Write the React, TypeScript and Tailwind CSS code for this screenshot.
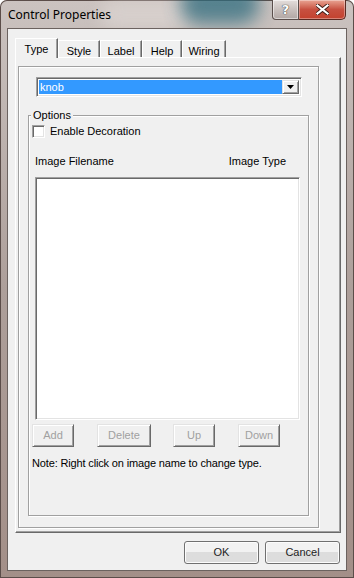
import React from "react";

const tabs = ["Type", "Style", "Label", "Help", "Wiring"];

const raised =
  "border border-t-[#e3e3e3] border-l-[#e3e3e3] border-r-[#696969] border-b-[#696969] shadow-[inset_1px_1px_0_#fff,inset_-1px_-1px_0_#a0a0a0] bg-[#f0f0f0]";

const sunken =
  "border border-t-[#a0a0a0] border-l-[#a0a0a0] border-r-white border-b-white shadow-[inset_1px_1px_0_#696969,inset_-1px_-1px_0_#e3e3e3]";

function SmallButton({ label, width }: { label: string; width: string }) {
  return (
    <div
      className={`${raised} ${width} flex h-[23px] items-center justify-center text-[#a0a0a0]`}
    >
      {label}
    </div>
  );
}

function DialogButton({ label }: { label: string }) {
  return (
    <div className="flex h-[23px] w-[75px] items-center justify-center rounded-[3px] border border-[#707070] bg-gradient-to-b from-[#f2f2f2] from-50% to-[#dddddd] to-50% text-[#1e1e1e] shadow-[inset_0_0_0_1px_#fcfcfc]">
      {label}
    </div>
  );
}

export default function App() {
  return (
    <div className="relative h-[578px] w-[354px] overflow-hidden rounded-t-[7px] bg-gradient-to-b from-[#cbc3c0] via-[#ad9f9a] to-[#a38f88] font-['Liberation_Sans',Arial,sans-serif] text-[10.5px] text-black shadow-[inset_0_0_0_1px_#5b4d49]">
      {/* blurred glass behind title */}
      <div className="absolute left-[100px] top-0 h-[30px] w-[90px] rounded-full bg-[#e0d9d6] opacity-60 blur-[8px]" />
      <div className="absolute -top-[16px] left-[180px] h-[40px] w-[80px] rounded-full bg-[#2f6c7e] opacity-75 blur-[9px]" />

      {/* title bar */}
      <div className="relative flex h-[28px] justify-between">
        <div className="pl-[8px] pt-[6px] font-['Noto_Sans',sans-serif] text-[12px] text-black">
          Control Properties
        </div>
        <div className="flex pr-[8px]">
          <div className="flex h-[20px] w-[27px] items-center justify-center rounded-bl-[4px] border border-t-0 border-[#5a4e4b] bg-gradient-to-b from-[#e4dedc] via-[#c9c0bd] to-[#b1a7a4] shadow-[inset_0_0_0_1px_rgba(255,255,255,0.5)]">
            <span className="font-['DejaVu_Sans',sans-serif] text-[13px] font-bold leading-none text-white [text-shadow:0_0_1px_#333,0_0_1px_#333]">
              ?
            </span>
          </div>
          <div className="flex h-[20px] w-[47px] items-center justify-center rounded-br-[5px] border border-l-0 border-t-0 border-[#5a2a22] bg-gradient-to-b from-[#e8a493] via-[#c75040] to-[#c3412e] shadow-[inset_0_0_0_1px_rgba(255,255,255,0.35)]">
            <svg width="13" height="11" viewBox="0 0 13 11">
              <path
                d="M1.5 1.5 L11.5 9.5 M11.5 1.5 L1.5 9.5"
                stroke="#3a1a14"
                strokeWidth="4"
                strokeLinecap="square"
              />
              <path
                d="M1.5 1.5 L11.5 9.5 M11.5 1.5 L1.5 9.5"
                stroke="#ffffff"
                strokeWidth="2.2"
                strokeLinecap="square"
              />
            </svg>
          </div>
        </div>
      </div>

      {/* client area */}
      <div className="relative mx-[7px] h-[543px] border border-[#6b625f] bg-[#f0f0f0]">
        {/* tab strip */}
        <div className="ml-[7px] mt-[9px] flex h-[19px] items-end">
          {tabs.map((t, i) =>
            i === 0 ? (
              <div
                key={t}
                className="relative z-10 -mb-px flex h-[20px] w-[43px] items-start justify-center border-l border-t border-r border-l-white border-t-white border-r-[#696969] bg-[#f0f0f0] pt-[2px] text-[11px] shadow-[inset_-1px_0_0_#a0a0a0]"
              >
                {t}
              </div>
            ) : (
              <div
                key={t}
                className={`flex h-[17px] items-start justify-center border-l border-t border-r border-l-white border-t-white border-r-[#696969] pt-[2px] text-[11px] shadow-[inset_-1px_0_0_#a0a0a0] ${
                  t === "Wiring" ? "w-[44px]" : t === "Help" ? "w-[40px]" : "w-[42px]"
                }`}
              >
                {t}
              </div>
            ),
          )}
        </div>

        {/* tab panel */}
        <div className="ml-[7px] h-[476px] w-[326px] border border-l-white border-t-white border-r-[#696969] border-b-[#696969] shadow-[inset_-1px_-1px_0_#a0a0a0]">
          {/* page frame */}
          <div className="ml-[2px] mt-[8px] h-[462px] w-[301px] border border-[#a0a0a0] shadow-[1px_1px_0_#fff,inset_1px_1px_0_#fff]">
            {/* combo box */}
            <div
              className={`${sunken} ml-[17px] mt-[10px] flex h-[20px] w-[266px] bg-white p-[2px]`}
            >
              <div className="flex flex-1 items-center bg-[#3399ff] pl-[1px] text-[11px] text-white">
                knob
              </div>
              <div className={`${raised} flex w-[17px] items-center justify-center`}>
                <svg width="7" height="4" viewBox="0 0 7 4">
                  <path d="M0 0 H7 L3.5 4 Z" fill="#000" />
                </svg>
              </div>
            </div>

            {/* Options group */}
            <div className="relative ml-[9px] mt-[18px] h-[401px] w-[281px] border border-[#a0a0a0] shadow-[1px_1px_0_#fff,inset_1px_1px_0_#fff]">
              <div className="absolute -top-[8px] left-[2px] bg-[#f0f0f0] px-[2px] text-[11px] leading-[14px]">
                Options
              </div>

              <div className="ml-[3px] mt-[9px] flex h-[13px] items-center gap-[5px]">
                <div className={`${sunken} h-[13px] w-[13px] bg-white`} />
                <span className="text-[11px]">Enable Decoration</span>
              </div>

              <div className="ml-[6px] mr-[22px] mt-[17px] flex h-[12px] items-center justify-between text-[11px]">
                <span>Image Filename</span>
                <span>Image Type</span>
              </div>

              <div className={`${sunken} ml-[6px] mt-[10px] h-[243px] w-[265px] bg-white`} />

              <div className="ml-[3px] mt-[4px] flex text-[11px]">
                <SmallButton label="Add" width="w-[42px]" />
                <div className="w-[23px]" />
                <SmallButton label="Delete" width="w-[54px]" />
                <div className="w-[22px]" />
                <SmallButton label="Up" width="w-[42px]" />
                <div className="w-[23px]" />
                <SmallButton label="Down" width="w-[42px]" />
              </div>

              <div className="ml-[3px] mt-[10px] text-[11px] leading-[13px] tracking-[-0.15px]">
                Note: Right click on image name to change type.
              </div>
            </div>
          </div>
        </div>

        {/* dialog buttons */}
        <div className="ml-[176px] mt-[8px] flex gap-[6px] text-[11px]">
          <DialogButton label="OK" />
          <DialogButton label="Cancel" />
        </div>
      </div>
    </div>
  );
}
